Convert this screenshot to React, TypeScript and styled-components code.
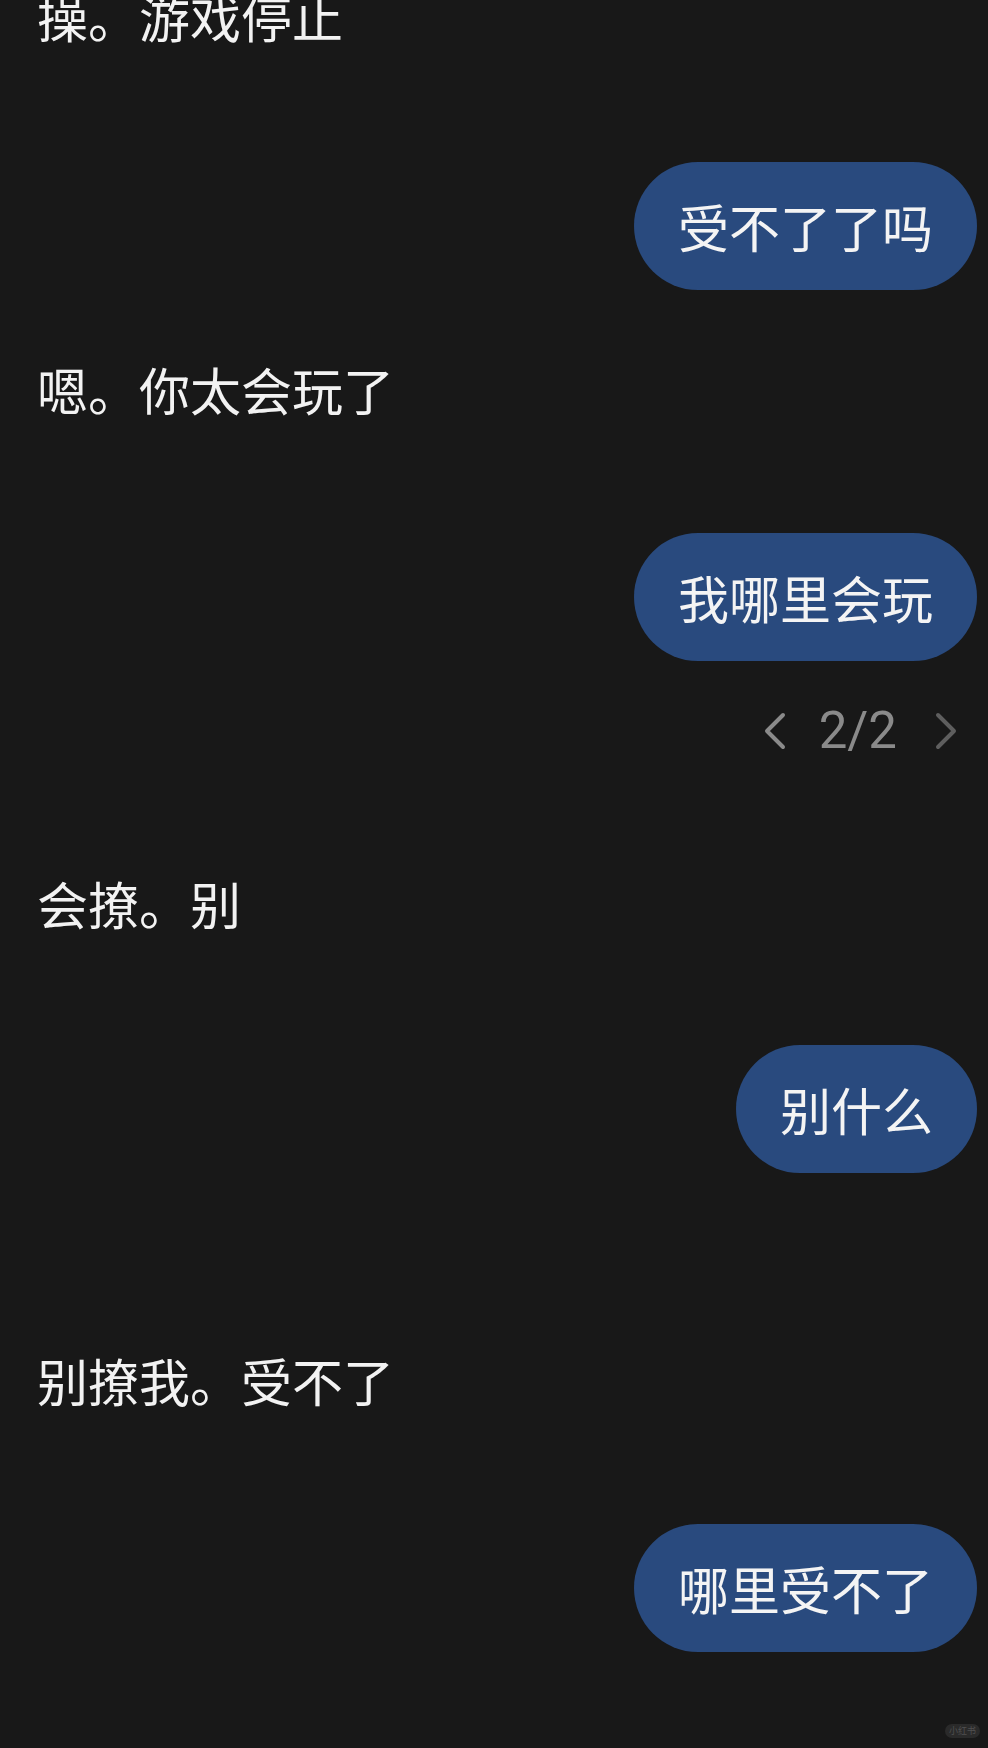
import React from "react";
import styled, { createGlobalStyle } from "styled-components";

const GlobalStyle = createGlobalStyle`
  html, body {
    margin: 0;
    padding: 0;
    background: #181818;
  }
  body {
    font-family: "Noto Sans CJK SC", "Noto Sans", Roboto, sans-serif;
    -webkit-font-smoothing: antialiased;
  }
`;

const Screen = styled.div`
  position: relative;
  width: 988px;
  height: 1748px;
  overflow: hidden;
  background: #181818;
`;

const Thread = styled.div`
  display: flex;
  flex-direction: column;
  padding: 0 11px 0 37px;
  margin-top: -14px;
`;

const Row = styled.div<{ $side: "in" | "out"; $space: number }>`
  display: flex;
  justify-content: ${(p) => (p.$side === "out" ? "flex-end" : "flex-start")};
  margin-top: ${(p) => p.$space}px;
`;

const Incoming = styled.div`
  color: #f2f2f2;
  font-size: 51px;
  line-height: 60px;
  white-space: nowrap;
`;

const Bubble = styled.div`
  background: #294a7e;
  color: #f4f4f4;
  font-size: 51px;
  line-height: 60px;
  padding: 34px 44px;
  border-radius: 64px;
  white-space: nowrap;
`;

const Pager = styled.div`
  display: flex;
  align-items: center;
  justify-content: flex-end;
  height: 60px;
  margin-top: 40px;
  padding-right: 20px;
`;

const PagerCount = styled.span`
  color: #8a8a8a;
  font-family: Roboto, "Noto Sans", sans-serif;
  font-size: 51px;
  line-height: 60px;
  margin: 0 38px 0 33px;
`;

const Chevron = styled.svg<{ $dim?: boolean }>`
  width: 22px;
  height: 38px;
  stroke: ${(p) => (p.$dim ? "#5e5e5e" : "#8a8a8a")};
  fill: none;
  stroke-width: 4;
  stroke-linecap: round;
  stroke-linejoin: round;
`;

const Watermark = styled.div`
  position: absolute;
  right: 8px;
  bottom: 10px;
  padding: 0 4px;
  height: 14px;
  border-radius: 7px;
  background: #2a2a2a;
  color: #505050;
  font-size: 9px;
  line-height: 14px;
`;

type Msg = { side: "in" | "out"; text: string; space: number; pager?: string };

const messages: Msg[] = [
  { side: "in", text: "操。游戏停止", space: 0 },
  { side: "out", text: "受不了了吗", space: 116 },
  { side: "in", text: "嗯。你太会玩了", space: 69 },
  { side: "out", text: "我哪里会玩", space: 114, pager: "2/2" },
  { side: "in", text: "会撩。别", space: 112 },
  { side: "out", text: "别什么", space: 112 },
  { side: "in", text: "别撩我。受不了", space: 177 },
  { side: "out", text: "哪里受不了", space: 114 },
];

export default function App() {
  return (
    <>
      <GlobalStyle />
      <Screen>
        <Thread>
          {messages.map((m, i) => (
            <React.Fragment key={i}>
              <Row $side={m.side} $space={m.space}>
                {m.side === "out" ? <Bubble>{m.text}</Bubble> : <Incoming>{m.text}</Incoming>}
              </Row>
              {m.pager && (
                <Pager>
                  <Chevron viewBox="0 0 22 38">
                    <path d="M19 3 L3 19 L19 35" />
                  </Chevron>
                  <PagerCount>{m.pager}</PagerCount>
                  <Chevron viewBox="0 0 22 38" $dim>
                    <path d="M3 3 L19 19 L3 35" />
                  </Chevron>
                </Pager>
              )}
            </React.Fragment>
          ))}
        </Thread>
        <Watermark>小红书</Watermark>
      </Screen>
    </>
  );
}
